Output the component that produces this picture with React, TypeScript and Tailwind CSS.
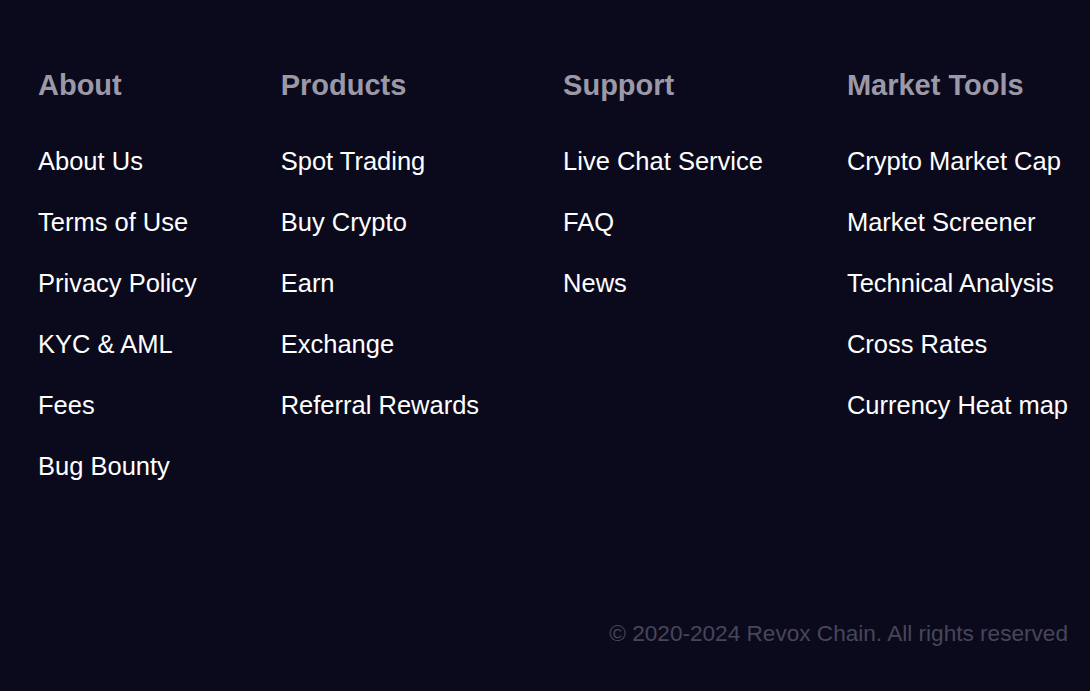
const columns = [
  {
    title: "About",
    links: ["About Us", "Terms of Use", "Privacy Policy", "KYC & AML", "Fees", "Bug Bounty"],
  },
  {
    title: "Products",
    links: ["Spot Trading", "Buy Crypto", "Earn", "Exchange", "Referral Rewards"],
  },
  {
    title: "Support",
    links: ["Live Chat Service", "FAQ", "News"],
  },
  {
    title: "Market Tools",
    links: ["Crypto Market Cap", "Market Screener", "Technical Analysis", "Cross Rates", "Currency Heat map"],
  },
];

export default function App() {
  return (
    <footer
      className="min-h-[691px] bg-[#0b0a1c] pl-[38px] pr-[22px] pt-[68px] pb-[41px] flex flex-col"
      style={{ fontFamily: '"Liberation Sans", Arial, sans-serif' }}
    >
      <div className="flex justify-between">
        {columns.map((col) => (
          <div key={col.title}>
            <h3 className="text-[29px] leading-[34px] font-bold text-[#9b99a8]">{col.title}</h3>
            <ul className="mt-[41px] flex flex-col gap-[25px]">
              {col.links.map((link) => (
                <li key={link}>
                  <a href="#" className="block text-[25.5px] leading-[36px] text-white whitespace-nowrap">
                    {link}
                  </a>
                </li>
              ))}
            </ul>
          </div>
        ))}
      </div>
      <p className="mt-auto text-right text-[22.6px] leading-[32px] text-[#47455a]">
        © 2020-2024 Revox Chain. All rights reserved
      </p>
    </footer>
  );
}
